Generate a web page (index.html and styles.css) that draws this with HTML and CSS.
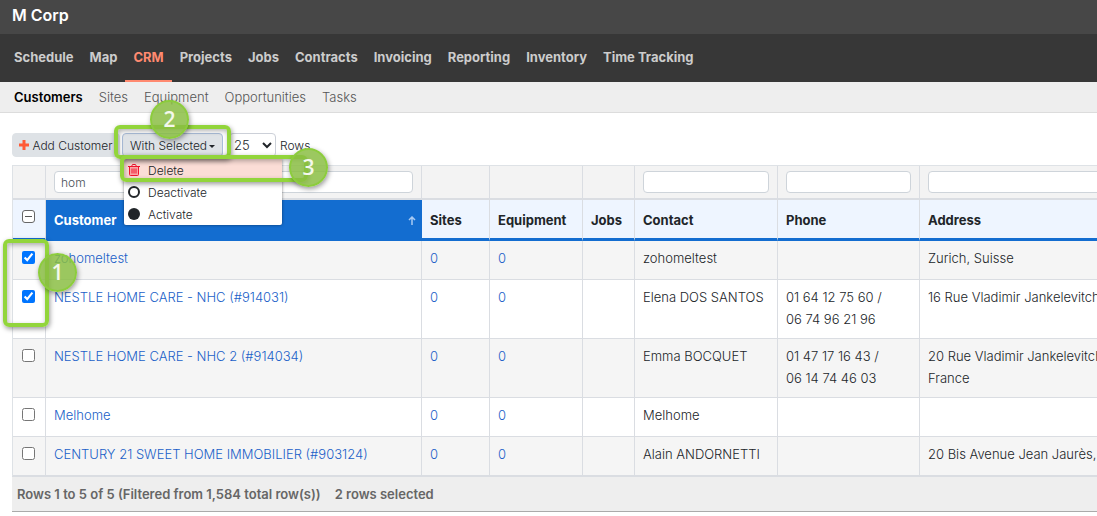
FILE: index.html
```
<!DOCTYPE html>
<html lang="en">
<head>
    <meta charset="UTF-8">
    <meta name="viewport" content="width=device-width, initial-scale=1.0">
    <title>Customers - M Corp</title>
    <link rel="stylesheet" href="styles.css">
</head>
<body>
    <header>
        <div class="brand">M Corp</div>
        <nav class="main-nav">
            <a href="#">Schedule</a>
            <a href="#">Map</a>
            <a href="#" class="active">CRM</a>
            <a href="#">Projects</a>
            <a href="#">Jobs</a>
            <a href="#">Contracts</a>
            <a href="#">Invoicing</a>
            <a href="#">Reporting</a>
            <a href="#">Inventory</a>
            <a href="#">Time Tracking</a>
        </nav>
        <nav class="sub-nav">
            <a href="#" class="active">Customers</a>
            <a href="#">Sites</a>
            <a href="#">Equipment</a>
            <a href="#">Opportunities</a>
            <a href="#">Tasks</a>
        </nav>
    </header>

    <main>
        <div class="toolbar">
            <button type="button" class="btn add-btn">
                <svg width="10" height="10" viewBox="0 0 10 10"><path d="M5 0v10M0 5h10" stroke="#ff5a36" stroke-width="3"/></svg>
                Add Customer
            </button>
            <div class="dropdown">
                <button type="button" class="btn selected-btn">With Selected <span class="caret"></span></button>
                <div class="menu">
                    <button type="button" class="menu-item danger">
                        <svg width="12" height="12" viewBox="0 0 12 12" fill="none" stroke="#f0142f"><path d="M1.5 2.5h9v8q0 1-1 1h-7q-1 0-1-1z" fill="#f9a5a5"/><path d="M0 2.5h12M3.5 2.5l1-2h3l1 2M4 4.5v5M6 4.5v5M8 4.5v5"/></svg>
                        Delete
                    </button>
                    <button type="button" class="menu-item">
                        <svg width="12" height="12" viewBox="0 0 12 12"><circle cx="6" cy="6" r="5" fill="none" stroke="#212529" stroke-width="2"/></svg>
                        Deactivate
                    </button>
                    <button type="button" class="menu-item">
                        <svg width="12" height="12" viewBox="0 0 12 12"><circle cx="6" cy="6" r="6" fill="#212529"/></svg>
                        Activate
                    </button>
                </div>
                <div class="frame frame-2"></div>
                <div class="frame frame-3"></div>
                <span class="step step-2">2</span>
                <span class="step step-3">3</span>
            </div>
            <select id="page-size" class="page-size">
                <option>10</option>
                <option selected>25</option>
                <option>50</option>
            </select>
            <label for="page-size">Rows</label>
        </div>

        <div class="grid">
            <div class="grid-scroll">
                <table>
                    <colgroup>
                        <col class="col-check">
                        <col class="col-customer">
                        <col class="col-sites">
                        <col class="col-equipment">
                        <col class="col-jobs">
                        <col class="col-contact">
                        <col class="col-phone">
                        <col>
                    </colgroup>
                    <thead>
                        <tr class="filters">
                            <td></td>
                            <td><input type="text" value="hom" aria-label="Filter customer"></td>
                            <td></td>
                            <td></td>
                            <td></td>
                            <td><input type="text" aria-label="Filter contact"></td>
                            <td><input type="text" aria-label="Filter phone"></td>
                            <td><input type="text" aria-label="Filter address"></td>
                        </tr>
                        <tr class="titles">
                            <th><input type="checkbox" class="check-all" aria-label="Select all"></th>
                            <th class="sorted">
                                <div class="sort-title">Customer
                                    <svg width="8" height="9" viewBox="0 0 8 9" fill="none" stroke="#a9caf2" stroke-width="1.5"><path d="M4 9V1M1 4l3-3 3 3"/></svg>
                                </div>
                            </th>
                            <th>Sites</th>
                            <th>Equipment</th>
                            <th>Jobs</th>
                            <th>Contact</th>
                            <th>Phone</th>
                            <th>Address</th>
                        </tr>
                    </thead>
                    <tbody>
                        <tr>
                            <td><input type="checkbox" aria-label="Select zohomeltest" checked></td>
                            <td><a href="#">zohomeltest</a></td>
                            <td><a href="#">0</a></td>
                            <td><a href="#">0</a></td>
                            <td></td>
                            <td>zohomeltest</td>
                            <td></td>
                            <td>Zurich, Suisse</td>
                        </tr>
                        <tr>
                            <td><input type="checkbox" aria-label="Select NESTLE HOME CARE - NHC" checked></td>
                            <td><a href="#">NESTLE HOME CARE - NHC (#914031)</a></td>
                            <td><a href="#">0</a></td>
                            <td><a href="#">0</a></td>
                            <td></td>
                            <td>Elena DOS SANTOS</td>
                            <td>01 64 12 75 60 /<br>06 74 96 21 96</td>
                            <td>16 Rue Vladimir Jankelevitch</td>
                        </tr>
                        <tr>
                            <td><input type="checkbox" aria-label="Select NESTLE HOME CARE - NHC 2"></td>
                            <td><a href="#">NESTLE HOME CARE - NHC 2 (#914034)</a></td>
                            <td><a href="#">0</a></td>
                            <td><a href="#">0</a></td>
                            <td></td>
                            <td>Emma BOCQUET</td>
                            <td>01 47 17 16 43 /<br>06 14 74 46 03</td>
                            <td>20 Rue Vladimir Jankelevitch<br>France</td>
                        </tr>
                        <tr>
                            <td><input type="checkbox" aria-label="Select Melhome"></td>
                            <td><a href="#">Melhome</a></td>
                            <td><a href="#">0</a></td>
                            <td><a href="#">0</a></td>
                            <td></td>
                            <td>Melhome</td>
                            <td></td>
                            <td></td>
                        </tr>
                        <tr>
                            <td><input type="checkbox" aria-label="Select CENTURY 21 SWEET HOME IMMOBILIER"></td>
                            <td><a href="#">CENTURY 21 SWEET HOME IMMOBILIER (#903124)</a></td>
                            <td><a href="#">0</a></td>
                            <td><a href="#">0</a></td>
                            <td></td>
                            <td>Alain ANDORNETTI</td>
                            <td></td>
                            <td>20 Bis Avenue Jean Jaurès,</td>
                        </tr>
                    </tbody>
                </table>
                <div class="summary">
                    <span>Rows 1 to 5 of 5 (Filtered from 1,584 total row(s))</span>
                    <span>2 rows selected</span>
                </div>
            </div>
            <div class="frame frame-1"></div>
            <span class="step step-1">1</span>
        </div>
    </main>
</body>
</html>
```
FILE: styles.css
```
/* General Styling */
* {
    box-sizing: border-box;
}

body {
    font-family: 'Inter', 'Liberation Sans', sans-serif;
    font-size: 13px;
    font-weight: 300;
    margin: 0;
    background-color: #fff;
    color: #212529;
    overflow-x: hidden;
}

a {
    text-decoration: none;
    color: #1a5fc8;
}

button, input, select {
    font-family: inherit;
    font-weight: inherit;
    color: inherit;
}

/* Header */
.brand {
    height: 34px;
    padding: 0 12px;
    background-color: #474747;
    color: #fff;
    font-size: 16px;
    font-weight: 600;
    line-height: 30px;
}

.main-nav {
    display: flex;
    height: 48px;
    padding: 0 6px;
    background-color: #373737;
}

.main-nav a {
    padding: 0 8px;
    border-bottom: 2px solid transparent;
    color: #ccc;
    font-weight: 700;
    line-height: 46px;
}

.main-nav a.active {
    color: #ff8a70;
    border-bottom-color: #ff8a70;
}

.sub-nav {
    display: flex;
    gap: 16px;
    height: 31px;
    padding: 0 14px;
    background-color: #eee;
    border-bottom: 1px solid #dcdcdc;
    line-height: 30px;
}

.sub-nav a {
    color: #555;
}

.sub-nav a.active {
    color: #000;
    font-weight: 600;
}

/* Toolbar */
.toolbar {
    display: flex;
    align-items: center;
    height: 24px;
    margin: 20px 12px 8px;
    font-size: 12px;
}

.btn {
    height: 24px;
    border: 1px solid #dee2e6;
    border-radius: 4px;
    background-color: #dee2e6;
    font-size: 12px;
    white-space: nowrap;
    cursor: pointer;
}

.add-btn {
    width: 108px;
    padding: 0 6px;
    text-align: left;
}

.dropdown {
    position: relative;
    margin-left: 2px;
}

.selected-btn {
    width: 101px;
    padding: 0 7px;
    border-color: #a9bcd8;
    text-align: left;
}

.caret {
    display: inline-block;
    margin-left: -1px;
    border: 3px solid transparent;
    border-top-color: #212529;
    border-bottom: 0;
    vertical-align: middle;
}

.menu {
    position: absolute;
    top: 26px;
    left: 2px;
    z-index: 2;
    width: 158px;
    border-radius: 2px;
    background-color: #fff;
    box-shadow: 0 0 3px rgba(0, 0, 0, 0.5);
}

.menu-item {
    display: flex;
    align-items: center;
    gap: 8px;
    width: 100%;
    height: 22px;
    padding: 0 4px;
    border: 0;
    background-color: transparent;
    font-size: 12px;
    cursor: pointer;
}

.menu-item.danger {
    background-color: #fbddd6;
}

.page-size {
    width: 47px;
    height: 24px;
    margin: 0 4px 0 6px;
    padding: 0;
    border: 1px solid #ccd0d8;
    border-radius: 4px;
    background-color: #fff;
    font-size: 13px;
}

/* Table Styling */
.grid {
    position: relative;
    margin-left: 12px;
}

.grid-scroll {
    overflow: hidden;
}

table {
    width: 1200px;
    table-layout: fixed;
    border-collapse: separate;
    border-spacing: 0;
    border-top: 1px solid #dee2e6;
    border-left: 1px solid #dee2e6;
}

.col-check { width: 33px; }
.col-customer { width: 376px; }
.col-sites { width: 68px; }
.col-equipment { width: 93px; }
.col-jobs { width: 52px; }
.col-contact { width: 143px; }
.col-phone { width: 142px; }

th, td {
    height: 39px;
    padding: 6px 8px 8px;
    border-right: 1px solid #dadde2;
    border-bottom: 1px solid #dadde2;
    line-height: 22px;
    text-align: left;
    vertical-align: top;
}

.filters td {
    height: 34px;
    padding: 5px 8px;
    border-bottom-width: 2px;
    background-color: #f3f3f3;
}

.filters input {
    display: block;
    width: 100%;
    height: 22px;
    padding: 0 6px;
    border: 1px solid #ced4da;
    border-radius: 4px;
    background-color: #fff;
    color: #495057;
    font-size: 12px;
}

.titles th {
    height: 41px;
    padding: 2px 8px 0;
    border-bottom: 3px solid #136dd0;
    background-color: #eef5ff;
    font-weight: 700;
    vertical-align: middle;
}

.titles th.sorted {
    background-color: #136dd0;
    border-right-color: #136dd0;
    color: #fff;
}

.sort-title {
    display: flex;
    justify-content: space-between;
    align-items: center;
    margin-right: -3px;
}

tbody tr:nth-child(odd) {
    background-color: #f5f5f5;
}

input[type="checkbox"] {
    display: block;
    width: 13px;
    height: 13px;
    margin: 4px 1px;
}

.titles .check-all {
    appearance: none;
    margin: 0 1px 8px;
    border: 1px solid #666;
    border-radius: 3px;
    background: linear-gradient(#555, #555) center / 7px 1px no-repeat #fff;
}

/* Summary */
.summary {
    display: flex;
    gap: 14px;
    padding: 0 5px;
    border-top: 1px solid #dadde2;
    border-bottom: 1px solid #aaa;
    background-color: #eee;
    color: #666;
    font-weight: 600;
    line-height: 34px;
}

/* Numbered Steps */
.frame {
    position: absolute;
    z-index: 3;
    border: 4px solid #92d53b;
    border-radius: 6px;
    box-shadow: 1px 2px 5px rgba(0, 0, 0, 0.4), inset 1px 2px 5px rgba(0, 0, 0, 0.3);
    pointer-events: none;
}

.step {
    position: absolute;
    z-index: 4;
    width: 39px;
    height: 39px;
    border: 2px solid #8ccc3d;
    border-radius: 50%;
    background-color: rgba(137, 190, 65, 0.84);
    box-shadow: 1px 2px 5px rgba(0, 0, 0, 0.4);
    color: #f4f8ec;
    font-family: 'Open Sans', sans-serif;
    font-size: 21px;
    font-weight: 600;
    line-height: 35px;
    text-align: center;
}

.frame-1 {
    top: 74px;
    left: -9px;
    width: 46px;
    height: 88px;
}

.step-1 {
    top: 88px;
    left: 26px;
}

.frame-2 {
    top: -8px;
    left: -8px;
    width: 117px;
    height: 34px;
}

.step-2 {
    top: -33px;
    left: 28px;
}

.frame-3 {
    top: 22px;
    left: -2px;
    width: 188px;
    height: 27px;
}

.step-3 {
    top: 15px;
    left: 167px;
}
```
